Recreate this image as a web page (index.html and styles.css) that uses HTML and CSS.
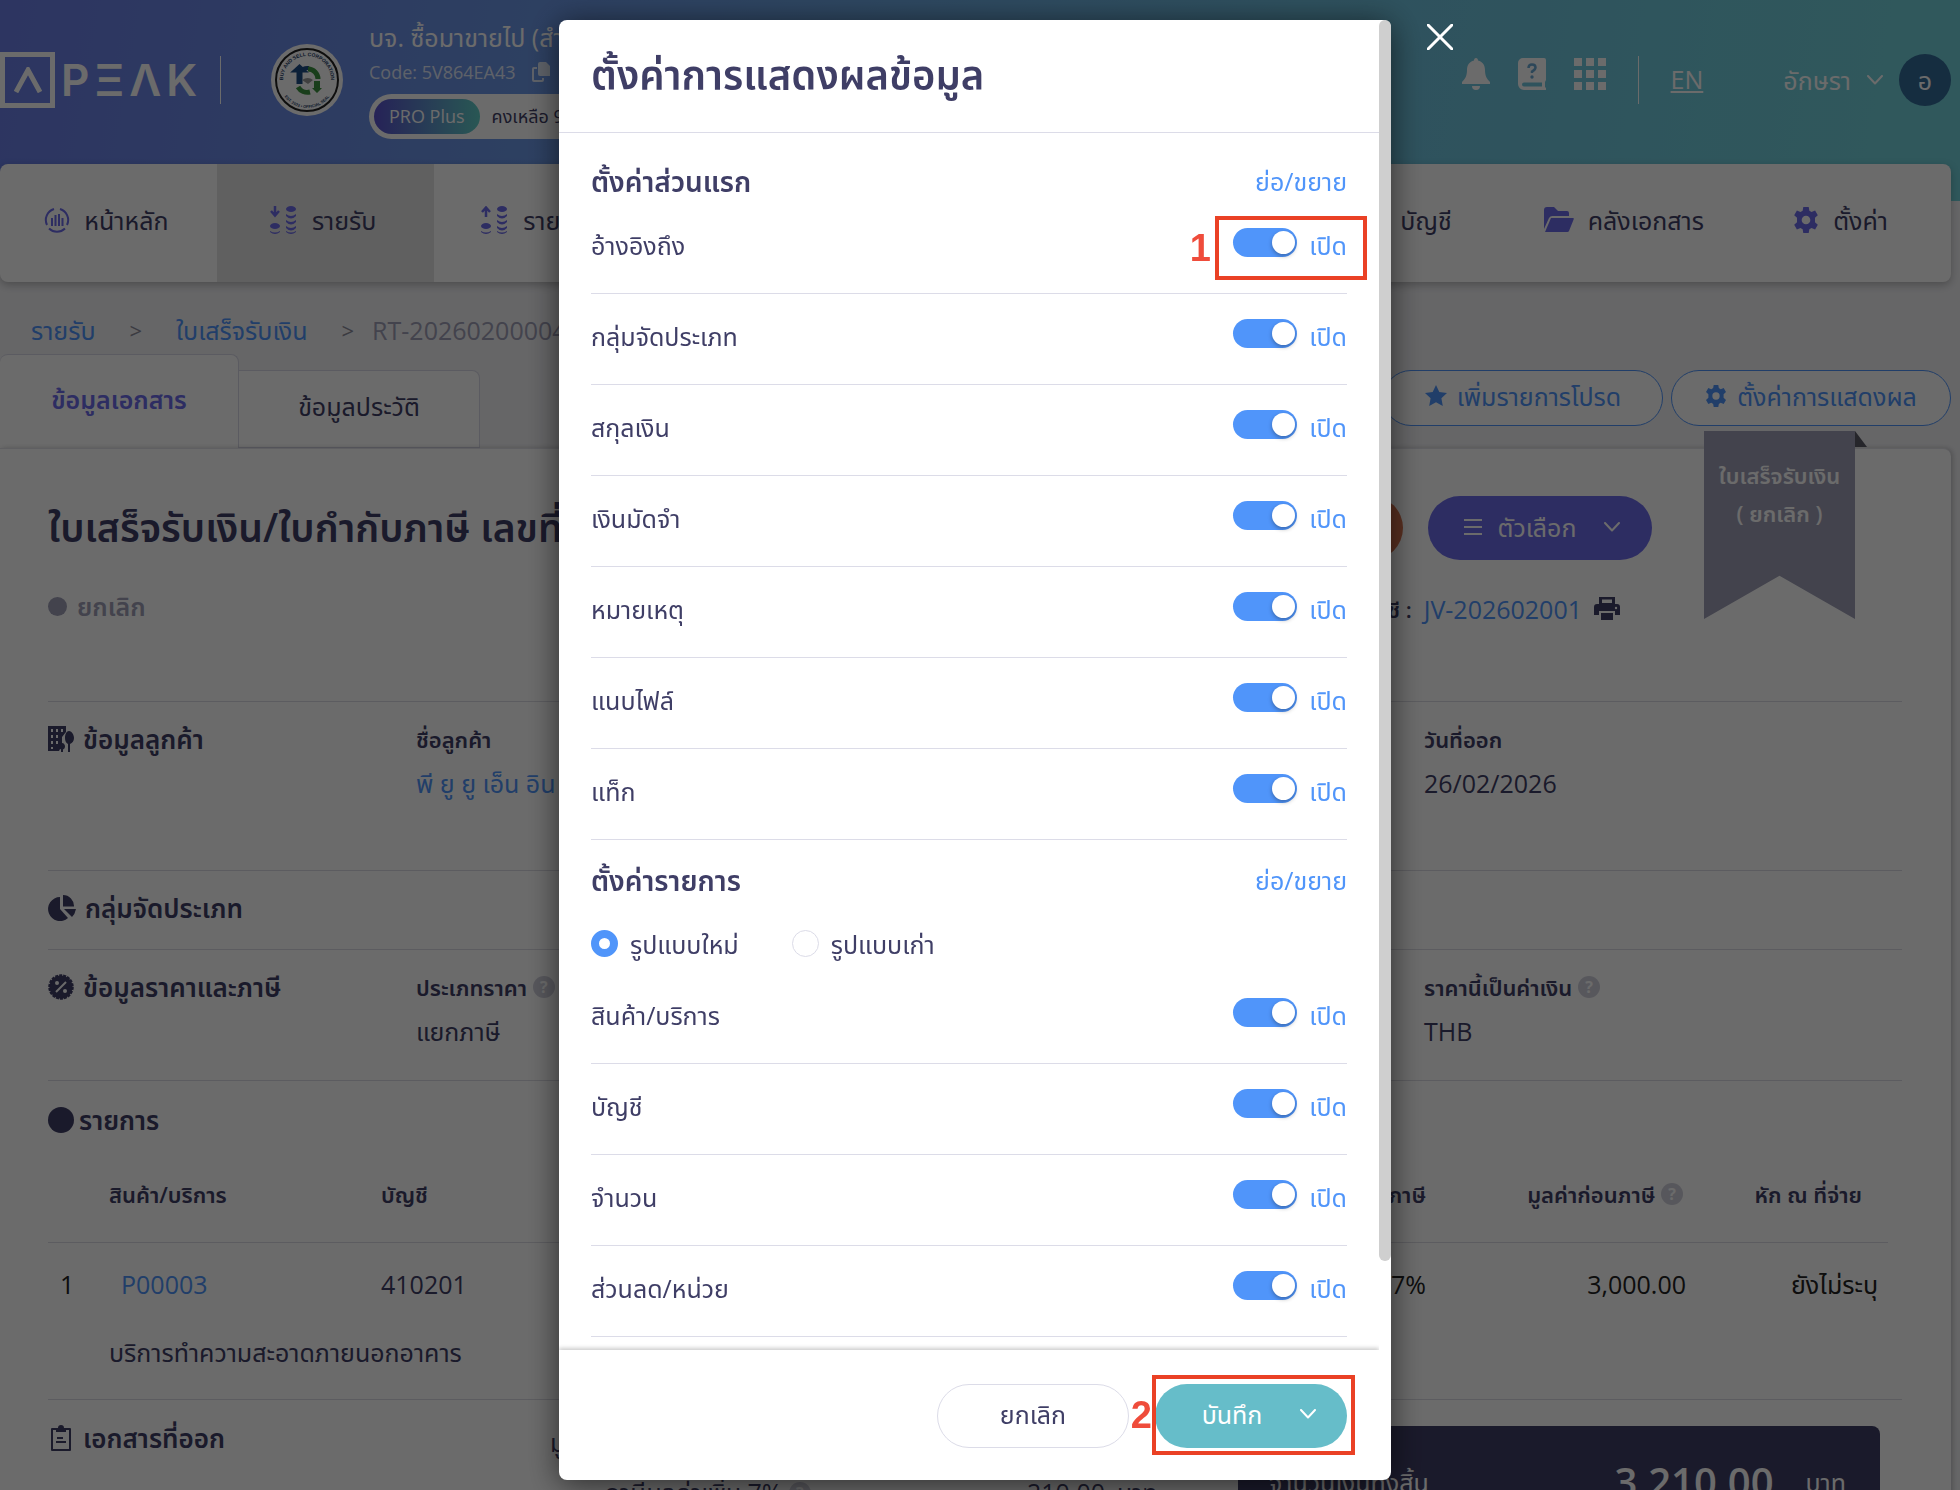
FILE: index.html
```html
<!DOCTYPE html>
<html lang="th">
<head>
  <meta charset="UTF-8">
  <meta name="viewport" content="width=device-width, initial-scale=1.0">
  <title>PEAK - ตั้งค่าการแสดงผลข้อมูล</title>
  <link rel="stylesheet" href="styles.css">
</head>
<body>
  <!-- shared icons -->
  <svg class="sprite" width="0" height="0">
    <symbol id="gear" viewBox="0 0 24 24">
      <path fill-rule="evenodd" d="M9.5 0h5l.6 3.4 2 1.2L20.400 3.300l2.500 4.400L20.300 10v4l2.600 2.300-2.500 4.400-3.300-1.300-2 1.200-.6 3.400h-5l-.6-3.400-2-1.200-3.300 1.300-2.500-4.400L3.700 14v-4L1.100 7.700l2.500-4.400 3.300 1.300 2-1.200zM12 8a4 4 0 1 0 0 8 4 4 0 0 0 0-8z"/>
    </symbol>
    <symbol id="chevron" viewBox="0 0 16 10">
      <path d="M1 1l7 7.500L15 1" fill="none" stroke="currentColor" stroke-width="2" stroke-linecap="round" stroke-linejoin="round"/>
    </symbol>
    <symbol id="coins" viewBox="0 0 12 28">
      <ellipse cx="6" cy="3" rx="5" ry="3"/>
      <path d="M1 8q5 4 10 0v2q-5 5-10 0zM1 14q5 4 10 0v2q-5 5-10 0zM1 20q5 4 10 0v2q-5 5-10 0zM1 25q5 3 10 0v1q-5 4-10 0z"/>
    </symbol>
    <symbol id="coins-low" viewBox="0 0 12 28">
      <ellipse cx="6" cy="20" rx="5" ry="3"/>
      <path d="M1 25q5 3 10 0v1q-5 4-10 0z"/>
    </symbol>
  </svg>

  <div class="page">
    <header class="topbar">
      <div class="brand" role="img" aria-label="PEAK">
        <span class="brand-box"><svg viewBox="0 0 28 26" width="28" height="26"><path d="M2 25L14 3l12 22" fill="none" stroke="currentColor" stroke-width="5"/></svg></span>
        <span class="brand-word"><span>P</span><span>Ξ</span><span>Λ</span><span>K</span></span>
      </div>
      <span class="bar"></span>
      <svg class="seal" viewBox="0 0 72 72" width="72" height="72">
        <circle cx="36" cy="36" r="36" fill="#fff"/>
        <circle cx="36" cy="36" r="31" fill="none" stroke="#222" stroke-width="2"/>
        <path id="arcTop" d="M19 53A24 24 0 1 1 53 53" fill="none"/>
        <path id="arcBottom" d="M8 36a28 28 0 0 0 56 0" fill="none"/>
        <text class="seal-text"><textPath href="#arcTop" startOffset="50%" text-anchor="middle">BUY AND SELL CORPORATION</textPath></text>
        <text class="seal-text seal-small"><textPath href="#arcBottom" startOffset="50%" text-anchor="middle">EST. 2023 • OFFICIAL SEAL</textPath></text>
        <path d="M27 40V27M30 40V27M23 27l5.500-5 5.500 5z" fill="#1d4c86" stroke="#1d4c86" stroke-width="3"/>
        <path d="M32 25a10 10 0 0 1 6-1" fill="none" stroke="#1d4c86" stroke-width="4"/>
        <path d="M37 25a10 10 0 0 1 10 10M27 43a11 11 0 0 0 12 5" fill="none" stroke="#3d9440" stroke-width="5"/>
        <path d="M43 37h6v7h2l-5 5-5-5h2z" fill="#3d9440"/>
        <path d="M31 36q6-4 11 0l-5 4z" fill="#999"/>
      </svg>
      <div class="company">
        <span class="company-name">บจ. ซื้อมาขายไป (สำนักงาน)</span>
        <span class="company-code">Code: 5V864EA43
          <svg viewBox="0 0 18 20" width="18" height="20" fill="currentColor"><path d="M8 0h6l4 4v10H8a2 2 0 0 1-2-2V2a2 2 0 0 1 2-2z"/><path d="M5 6H2a1 1 0 0 0-1 1v11a1 1 0 0 0 1 1h8a1 1 0 0 0 1-1v-2" fill="none" stroke="currentColor" stroke-width="2"/></svg>
        </span>
        <span class="plan"><b>PRO Plus</b>คงเหลือ 99 วัน</span>
      </div>
      <div class="tools">
        <svg viewBox="0 0 28 32" width="28" height="32"><path d="M14 0c1.300 0 2 1 2 2.500 4.500 1.200 7 4.500 7 9.500 0 6 2 9 5 12v2H0v-2c3-3 5-6 5-12 0-5 2.500-8.300 7-9.500C12 1 12.700 0 14 0zM10 28h8a4 4 0 0 1-8 0z"/></svg>
        <svg viewBox="0 0 28 32" width="28" height="32"><path fill-rule="evenodd" d="M5 0h21a2 2 0 0 1 2 2v20l-1 2v5l1 1v2H6a6 6 0 0 1-6-6V5a5 5 0 0 1 5-5zM6 24.500a2 2 0 0 0 0 4h18v-4z"/><path d="M10.500 10q0-3.500 3.500-3.500t3.500 3q0 2-3.500 4v1.500" fill="none" stroke="#6ba9d4" stroke-width="2.500"/><circle cx="14" cy="19" r="1.700" fill="#6ba9d4"/></svg>
        <svg viewBox="0 0 32 32" width="32" height="32"><path d="M0 0h8v8H0zM12 0h8v8h-8zM24 0h8v8h-8zM0 12h8v8H0zM12 12h8v8h-8zM24 12h8v8h-8zM0 24h8v8H0zM12 24h8v8h-8zM24 24h8v8h-8z"/></svg>
      </div>
      <span class="bar"></span>
      <a class="lang" href="#">EN</a>
      <button class="user" type="button">อักษรา <svg width="16" height="10"><use href="#chevron"/></svg><span class="avatar">อ</span></button>
    </header>

    <nav class="menu">
      <a href="#"><svg viewBox="0 0 26 26" width="26" height="26"><path d="M10 2A11.500 11.500 0 0 0 3 18M16 2a11.500 11.500 0 0 1 7 16M5 21.500a11.500 11.500 0 0 0 16 0" fill="none" stroke="currentColor" stroke-width="2"/><path d="M8 11v8M11.500 8v11M15 7v12M18.500 11v8" stroke="currentColor" stroke-width="2"/></svg>หน้าหลัก</a>
      <a href="#" class="active"><svg viewBox="0 0 28 28" width="28" height="28"><path d="M5 0v9M1 5l4 4.500L9 5" fill="none" stroke="currentColor" stroke-width="2.500"/><use href="#coins-low" x="-1" width="12" height="28"/><use href="#coins" x="15" width="12" height="28"/></svg>รายรับ</a>
      <a href="#"><svg viewBox="0 0 28 28" width="28" height="28"><path d="M5 11V2M1 6l4-4.500L9 6" fill="none" stroke="currentColor" stroke-width="2.500"/><use href="#coins-low" x="-1" width="12" height="28"/><use href="#coins" x="15" width="12" height="28"/></svg>รายจ่าย</a>
      <a href="#" class="menu-right"><svg viewBox="0 0 24 24" width="24" height="24"><path d="M2 2h20v20H2z"/></svg>บัญชี</a>
      <a href="#"><svg viewBox="0 0 30 26" width="30" height="26"><path d="M0 22V3a3 3 0 0 1 3-3h7l4 4h9a2 2 0 0 1 2 2v3H9a4 4 0 0 0-4 2z"/><path d="M7 11h22q1 0 .8 1L25 24q-.5 1-1.500 1H1z"/></svg>คลังเอกสาร</a>
      <a href="#"><svg width="26" height="26"><use href="#gear"/></svg>ตั้งค่า</a>
    </nav>

    <div class="crumbs">
      <a href="#">รายรับ</a><span>&gt;</span><a href="#">ใบเสร็จรับเงิน</a><span class="last">&gt;</span><em>RT-20260200004</em>
    </div>

    <div class="tabs">
      <button type="button" class="tab selected">ข้อมูลเอกสาร</button>
      <button type="button" class="tab">ข้อมูลประวัติ</button>
      <div class="tab-actions">
        <button type="button"><svg viewBox="0 0 22 22" width="22" height="22"><path d="M11 0l3.300 7 7.700 1-5.600 5.300L17.800 21 11 17.300 4.200 21l1.400-7.700L0 8l7.700-1z"/></svg>เพิ่มรายการโปรด</button>
        <button type="button"><svg width="22" height="22"><use href="#gear"/></svg>ตั้งค่าการแสดงผล</button>
      </div>
    </div>

    <main class="doc">
      <div class="ribbon"><span>ใบเสร็จรับเงิน<br>( ยกเลิก )</span></div>
      <div class="doc-head">
        <div>
          <h1>ใบเสร็จรับเงิน/ใบกำกับภาษี เลขที่</h1>
          <p class="status"><i></i>ยกเลิก</p>
        </div>
        <div class="doc-side">
          <div class="doc-buttons">
            <button type="button" class="print-btn" aria-label="พิมพ์"></button>
            <button type="button" class="option-btn"><svg viewBox="0 0 18 16" width="18" height="16"><path d="M0 1h18M0 8h18M0 15h18" stroke="currentColor" stroke-width="2"/></svg>ตัวเลือก<svg width="16" height="10"><use href="#chevron"/></svg></button>
          </div>
          <p class="journal"><b>บัญชี :</b> <a href="#">JV-202602001</a>
            <svg viewBox="0 0 26 24" width="26" height="24"><path fill-rule="evenodd" d="M5 0h16v7H5zM8 2.500V6h10V2.500z"/><path d="M3 7h20a3 3 0 0 1 3 3v8h-5v-4H5v4H0v-8a3 3 0 0 1 3-3z"/><path d="M7 16h12v7H7z"/><circle cx="22" cy="11" r="1.200" fill="#fff"/></svg>
          </p>
        </div>
      </div>

      <section class="info customer">
        <h2><svg viewBox="0 0 26 26" width="26" height="26"><path fill-rule="evenodd" d="M0 0h18v6l-4 5v8l-3 6H0zM3 3v3h2V3zm5 0v3h2V3zm5 0v3h2V3zM3 9v3h2V9zm5 0v3h2V9zm-5 6v3h2v-3zm5 0v3h2v-3zm-5 6v2h2v-2z"/><path d="M21 5c3 0 5 4 5 7s-1.500 5-4 6v8h-2v-8c-2-1-3-3-3-6s1-7 4-7z"/><path d="M14 17c2 0 3 2 3 3.500S16 23 15 23.500V26h-2v-2.500c-1-.5-2-1.500-2-3s1-3.500 3-3.500z"/></svg>ข้อมูลลูกค้า</h2>
        <div class="field"><b>ชื่อลูกค้า</b><a href="#">พี ยู ยู เอ็น อิน</a></div>
        <div class="field"><b>วันที่ออก</b><span>26/02/2026</span></div>
      </section>

      <section class="info">
        <h2><svg viewBox="0 0 28 26" width="28" height="26"><path d="M12 2v12l8 9A12 12 0 1 1 12 2z"/><path d="M15 0a11 11 0 0 1 11 11.500H15zM16 14h12q-1 5-4 8z"/></svg>กลุ่มจัดประเภท</h2>
      </section>

      <section class="info price">
        <h2><svg viewBox="0 0 26 26" width="26" height="26"><circle cx="13" cy="13" r="11.500" stroke="currentColor" stroke-width="2.500" stroke-dasharray="3 1"/><path d="M8 18L18 8" stroke="#fff" stroke-width="2"/><circle cx="9" cy="9" r="2" fill="#fff"/><circle cx="17" cy="17" r="2" fill="#fff"/></svg>ข้อมูลราคาและภาษี</h2>
        <div class="field"><b>ประเภทราคา <i class="help">?</i></b><span>แยกภาษี</span></div>
        <div class="field"><b>ราคานี้เป็นค่าเงิน <i class="help">?</i></b><span>THB</span></div>
      </section>

      <section class="items">
        <h2><i class="dot"></i>รายการ</h2>
        <table>
          <thead>
            <tr>
              <th class="c-no"></th>
              <th class="c-item">สินค้า/บริการ</th>
              <th class="c-acc">บัญชี</th>
              <th class="c-vat">ภาษี</th>
              <th class="c-sum">มูลค่าก่อนภาษี <i class="help">?</i></th>
              <th class="c-wht">หัก ณ ที่จ่าย</th>
            </tr>
          </thead>
          <tbody>
            <tr>
              <td class="c-no">1</td>
              <td class="c-item"><a href="#">P00003</a></td>
              <td class="c-acc">410201</td>
              <td class="c-vat">7%</td>
              <td class="c-sum">3,000.00</td>
              <td class="c-wht">ยังไม่ระบุ</td>
            </tr>
            <tr class="desc">
              <td></td>
              <td colspan="5">บริการทำความสะอาดภายนอกอาคาร</td>
            </tr>
          </tbody>
        </table>
      </section>

      <section class="summary">
        <h2><svg viewBox="0 0 26 26" width="26" height="26"><path d="M4 4h18v21H4z" fill="none" stroke="currentColor" stroke-width="2" stroke-linejoin="round"/><path d="M8 3h2a3 3 0 0 1 6 0h2v4H8zM9 12h6v2H9zM8 16h10v2H8z"/></svg>เอกสารที่ออก</h2>
        <div class="sums">
          <p>มูลค่าก่อนภาษี</p>
          <p class="vat"><span>ภาษีมูลค่าเพิ่ม 7% <i class="help">?</i></span><span>210.00</span><span>บาท</span></p>
        </div>
        <div class="total"><span>จำนวนเงินทั้งสิ้น</span><strong>3,210.00</strong><span>บาท</span></div>
      </section>
    </main>
  </div>

  <div class="overlay">
    <div class="modal" role="dialog" aria-labelledby="modalTitle">
      <button type="button" class="close" aria-label="ปิด"><svg viewBox="0 0 26 26" width="26" height="26"><path d="M1 1l24 24M25 1L1 25" stroke="#fff" stroke-width="3" stroke-linecap="round"/></svg></button>
      <div class="scrollbar"></div>
      <h2 class="modal-title" id="modalTitle">ตั้งค่าการแสดงผลข้อมูล</h2>

      <div class="modal-body">
        <div class="group-head"><h3>ตั้งค่าส่วนแรก</h3><a href="#">ย่อ/ขยาย</a></div>
        <div class="row"><span>อ้างอิงถึง</span><label><input type="checkbox" checked>เปิด</label><div class="mark mark-1"><b>1</b></div></div>
        <div class="row"><span>กลุ่มจัดประเภท</span><label><input type="checkbox" checked>เปิด</label></div>
        <div class="row"><span>สกุลเงิน</span><label><input type="checkbox" checked>เปิด</label></div>
        <div class="row"><span>เงินมัดจำ</span><label><input type="checkbox" checked>เปิด</label></div>
        <div class="row"><span>หมายเหตุ</span><label><input type="checkbox" checked>เปิด</label></div>
        <div class="row"><span>แนบไฟล์</span><label><input type="checkbox" checked>เปิด</label></div>
        <div class="row"><span>แท็ก</span><label><input type="checkbox" checked>เปิด</label></div>

        <div class="group-head"><h3>ตั้งค่ารายการ</h3><a href="#">ย่อ/ขยาย</a></div>
        <div class="radios">
          <label><input type="radio" name="layout" checked>รูปแบบใหม่</label>
          <label><input type="radio" name="layout">รูปแบบเก่า</label>
        </div>
        <div class="row"><span>สินค้า/บริการ</span><label><input type="checkbox" checked>เปิด</label></div>
        <div class="row"><span>บัญชี</span><label><input type="checkbox" checked>เปิด</label></div>
        <div class="row"><span>จำนวน</span><label><input type="checkbox" checked>เปิด</label></div>
        <div class="row"><span>ส่วนลด/หน่วย</span><label><input type="checkbox" checked>เปิด</label></div>
      </div>

      <div class="modal-foot">
        <button type="button" class="cancel">ยกเลิก</button>
        <div class="save-wrap">
          <button type="button" class="save">บันทึก<svg width="16" height="10"><use href="#chevron"/></svg></button>
          <div class="mark mark-2"><b>2</b></div>
        </div>
      </div>
    </div>
  </div>
</body>
</html>
```
FILE: styles.css
```css
* {
  box-sizing: border-box;
}
body {
  margin: 0;
  height: 100vh;
  overflow: hidden;
  background: #f3f3f6;
  color: #3f3e66;
  font-family: "Open Sans", "Noto Sans Thai", "Noto Sans", sans-serif;
  font-size: 25px;
  font-weight: 400;
  line-height: 32px;
}
h1, h2, h3, p {
  margin: 0;
}
a {
  color: #5095fa;
  text-decoration: none;
}
button {
  font: inherit;
  color: inherit;
  border: 0;
  background: none;
  padding: 0;
  cursor: pointer;
}
svg {
  fill: currentColor;
  flex: none;
}
.sprite {
  position: absolute;
}

/* top bar */
.page {
  height: 100vh;
  overflow: hidden;
  padding-right: 9px;
  background: linear-gradient(100deg, #6b7ee7 0%, #6da0e8 35%, #6fc0e0 65%, #72d1db 95%) no-repeat 0 0 / 100% 201px;
  background-color: #f3f3f6;
}
.topbar {
  display: flex;
  align-items: center;
  height: 164px;
  padding-bottom: 4px;
  color: #fff;
}
.brand {
  display: flex;
  align-items: center;
  width: 220px;
}
.brand-box {
  display: flex;
  align-items: center;
  justify-content: center;
  width: 55px;
  height: 56px;
  border: 5px solid #fff;
}
.brand-word {
  display: flex;
  gap: 5px;
  margin-left: 6px;
  font-family: Inter, sans-serif;
  font-size: 44px;
  font-weight: 600;
  line-height: 48px;
}
.bar {
  width: 1px;
  height: 48px;
  background: #fff;
}
.seal {
  margin: 0 26px 0 50px;
}
.seal-text {
  font: bold 5px "Liberation Sans", sans-serif;
  fill: #1d3c66;
}
.seal-small {
  font-size: 4px;
}
.company {
  display: flex;
  flex-direction: column;
  flex: 1;
  align-items: flex-start;
  padding-bottom: 4px;
  white-space: nowrap;
}
.company-name {
  line-height: 38px;
}
.company-code {
  display: flex;
  align-items: center;
  gap: 16px;
  font-size: 18px;
  opacity: .8;
}
.plan {
  display: flex;
  align-items: center;
  gap: 12px;
  height: 45px;
  padding: 0 20px 0 5px;
  margin-top: 6px;
  border-radius: 23px;
  background: #fff;
  color: #3f3e66;
  font-size: 18px;
}
.plan b {
  padding: 0 15px;
  border-radius: 18px;
  background: linear-gradient(90deg, #5b52d0, #62cfc8);
  color: #fff;
  font-weight: 400;
  line-height: 35px;
}
.tools {
  display: flex;
  gap: 28px;
  margin-right: 32px;
  padding-bottom: 12px;
}
.lang {
  margin: 0 80px 0 32px;
  padding-bottom: 3px;
  color: #fff;
  text-decoration: underline;
}
.user {
  display: flex;
  align-items: center;
  gap: 16px;
}
.avatar {
  width: 52px;
  border-radius: 50%;
  background: #346b98;
  line-height: 52px;
}

/* menu */
.menu {
  display: grid;
  grid-template-columns: repeat(9, 1fr);
  height: 118px;
  border-radius: 8px;
  background: #fff;
  box-shadow: 0 3px 8px rgba(0, 0, 0, .25);
}
.menu a {
  display: flex;
  align-items: center;
  justify-content: center;
  gap: 14px;
  padding: 0 4px 6px 0;
  color: #3f3e66;
}
.menu svg {
  color: #6d6bea;
}
.menu .active {
  background: #e5e5e5;
}
.menu .menu-right {
  grid-column: 7;
}

.crumbs {
  display: flex;
  align-items: center;
  height: 72px;
  padding: 24px 31px 0;
}
.crumbs span {
  margin: 0 34px;
  color: #8c8c9b;
  font-size: 22px;
}
.crumbs .last {
  margin-right: 18px;
}
.crumbs em {
  font-style: normal;
  color: #9f9fb7;
}

/* tabs */
.tabs {
  display: flex;
  align-items: flex-end;
  height: 94px;
}
.tab {
  width: 241px;
  height: 78px;
  padding-bottom: 6px;
  border: 1px solid #d9d9e6;
  border-left: 0;
  border-radius: 0 8px 0 0;
  background: #fff;
}
.tab.selected {
  width: 239px;
  height: 94px;
  border-bottom: 0;
  border-radius: 8px 8px 0 0;
  color: #6d6bea;
  font-weight: 600;
}
.tab-actions {
  display: flex;
  gap: 8px;
  margin-left: auto;
  padding-bottom: 22px;
}
.tab-actions button {
  display: flex;
  align-items: center;
  justify-content: center;
  gap: 10px;
  width: 280px;
  height: 56px;
  padding-bottom: 4px;
  border: 1px solid #5095fa;
  border-radius: 28px;
  background: #fff;
  color: #5095fa;
}

/* document */
.doc {
  position: relative;
  height: 1100px;
  padding: 0 49px 0 48px;
  background: #fff;
  border-top: 1px solid #e2e2ea;
  border-radius: 0 8px 0 0;
  box-shadow: 2px 0 5px rgba(0, 0, 0, .2);
}
.ribbon {
  position: absolute;
  top: -18px;
  right: 96px;
  width: 151px;
  height: 188px;
  padding-top: 25px;
  background: #9f9fb7;
  clip-path: polygon(0 0, 100% 0, 100% 100%, 50% 77%, 0 100%);
  color: #fff;
  font-size: 22px;
  font-weight: 600;
  line-height: 38px;
  text-align: center;
}
.doc::before {
  content: "";
  position: absolute;
  top: -18px;
  right: 84px;
  border-left: 12px solid #5b5b66;
  border-top: 16px solid transparent;
}
.doc-head {
  display: flex;
  justify-content: space-between;
  height: 252px;
  padding-top: 47px;
  padding-right: 250px;
}
h1 {
  font-size: 39px;
  font-weight: 600;
  line-height: 62px;
  white-space: nowrap;
}
.status {
  display: flex;
  align-items: center;
  gap: 10px;
  margin-top: 32px;
  color: #9f9fb7;
  font-weight: 600;
}
.status i {
  width: 19px;
  height: 19px;
  border-radius: 50%;
  background: #9f9fb7;
}
.doc-buttons {
  display: flex;
  justify-content: flex-end;
  gap: 25px;
}
.print-btn {
  width: 120px;
  border-radius: 32px;
  background: #d8734f;
}
.option-btn {
  display: flex;
  align-items: center;
  justify-content: center;
  gap: 16px;
  width: 224px;
  height: 64px;
  padding: 0 0 3px 4px;
  border-radius: 32px;
  background: #6d6bea;
  color: #fff;
}
.option-btn svg:last-child {
  margin-left: 12px;
}
.journal {
  display: flex;
  align-items: center;
  justify-content: flex-end;
  gap: 12px;
  margin: 33px 32px 0 0;
}
.journal b,
.field b,
th {
  font-size: 22px;
  font-weight: 600;
}
h2 {
  display: flex;
  align-items: center;
  gap: 9px;
  height: 32px;
  font-size: 26px;
  font-weight: 600;
  white-space: nowrap;
}
.info {
  display: grid;
  grid-template-columns: 368px 1008fr 478fr;
  align-items: start;
  min-height: 79px;
  padding-top: 21px;
  border-top: 1px solid #dcdce4;
}
.customer {
  min-height: 169px;
}
.price {
  min-height: 131px;
}
.field {
  display: flex;
  flex-direction: column;
  gap: 12px;
}
.help {
  display: inline-block;
  width: 22px;
  border-radius: 50%;
  background: #d0d0dc;
  color: #fff;
  font-size: 16px;
  font-style: normal;
  font-weight: 700;
  line-height: 22px;
  text-align: center;
  vertical-align: 3px;
}
.items {
  height: 319px;
  padding-top: 23px;
  border-top: 1px solid #dcdce4;
}
.dot {
  width: 26px;
  height: 26px;
  margin-right: -4px;
  border-radius: 50%;
  background: #3f3e66;
}
table {
  width: calc(100% - 14px);
  margin-top: 11px;
  border-collapse: collapse;
  table-layout: fixed;
}
th {
  height: 95px;
  padding: 0;
  border-bottom: 1px solid #dcdce4;
  text-align: left;
}
td {
  height: 84px;
  padding: 0;
}
.c-no {
  width: 61px;
  padding-left: 12px;
}
.c-item {
  width: 272px;
}
td.c-item {
  padding-left: 12px;
}
.c-vat,
.c-sum,
.c-wht {
  width: 260px;
  text-align: right;
  white-space: nowrap;
}
.c-wht {
  width: 202px;
}
th.c-sum {
  padding-right: 3px;
}
th.c-wht {
  padding-right: 26px;
}
td.c-no,
td.c-vat,
td.c-sum,
td.c-wht {
  color: #222;
}
td.c-wht {
  padding-right: 10px;
}
.desc td {
  height: 52px;
}
.summary {
  display: flex;
  padding-top: 22px;
  border-top: 1px solid #dcdce4;
}
.summary h2 {
  width: 502px;
}
.sums {
  flex: 1;
  padding-top: 4px;
}
.sums .vat {
  display: flex;
  gap: 12px;
  padding: 18px 0 0 55px;
}
.vat span:first-child {
  width: 410px;
}
.total {
  display: flex;
  gap: 32px;
  width: 642px;
  height: 150px;
  margin: 4px 22px 0 0;
  padding: 34px 34px 0 31px;
  border-radius: 8px;
  background: #3f3e66;
  color: #fff;
  line-height: 44px;
}
.total strong {
  margin-left: auto;
  font-size: 40px;
  font-weight: 600;
}

/* modal */
.overlay {
  position: fixed;
  inset: 0;
  display: flex;
  justify-content: center;
  padding: 20px 10px 10px 0;
  background: rgba(0, 0, 0, .58);
}
.modal {
  position: relative;
  display: flex;
  flex-direction: column;
  width: 832px;
  padding-right: 12px;
  border-radius: 8px;
  background: #fff;
  box-shadow: 0 4px 32px rgba(0, 0, 0, .6);
}
.close {
  position: absolute;
  top: 4px;
  left: calc(100% + 36px);
}
.scrollbar {
  position: absolute;
  top: 0;
  right: 0;
  width: 12px;
  height: 85%;
  border-radius: 6px;
  background: #cfcfcf;
}
.modal-title {
  height: 113px;
  padding: 0 32px 2px;
  border-bottom: 1px solid #dcdce8;
  font-size: 40px;
}
.modal-body {
  flex: 1;
  min-height: 0;
  overflow: hidden;
  padding: 8px 32px 0;
}
.group-head {
  display: flex;
  align-items: center;
  justify-content: space-between;
  height: 62px;
  padding-top: 18px;
}
h3 {
  font-size: 28px;
  font-weight: 600;
}
.row {
  position: relative;
  display: flex;
  align-items: center;
  justify-content: space-between;
  height: 91px;
  padding-bottom: 7px;
  border-bottom: 1px solid #dcdce8;
}
.row label {
  display: flex;
  align-items: center;
  gap: 12px;
  color: #5095fa;
}
.row input {
  display: flex;
  align-items: center;
  justify-content: flex-end;
  appearance: none;
  width: 64px;
  height: 29px;
  margin: 0 0 4px;
  padding-right: 2px;
  border-radius: 15px;
  background: #5095fa;
}
.row input::before {
  content: "";
  width: 23px;
  height: 23px;
  border-radius: 50%;
  background: #fff;
  box-shadow: 0 2px 4px rgba(0, 0, 0, .3);
}
.radios {
  display: flex;
  gap: 53px;
  height: 71px;
  align-items: center;
  padding-top: 12px;
}
.radios label {
  display: flex;
  align-items: center;
  gap: 12px;
}
.radios input {
  appearance: none;
  width: 27px;
  height: 27px;
  margin: 0;
  border: 1px solid #dcdce8;
  border-radius: 50%;
}
.radios input:checked {
  border: 8px solid #5095fa;
}
.modal-foot {
  display: flex;
  gap: 26px;
  align-items: flex-start;
  justify-content: flex-end;
  height: 130px;
  padding: 34px 32px 0;
  box-shadow: 0 -2px 4px rgba(0, 0, 0, .2);
  clip-path: inset(-8px 0 0 0);
}
.modal-foot button {
  width: 192px;
  height: 64px;
  padding-bottom: 4px;
  border-radius: 32px;
}
.cancel {
  border: 1px solid #dcdce8;
}
.save-wrap {
  position: relative;
}
.modal-foot .save {
  display: flex;
  align-items: center;
  justify-content: center;
  gap: 38px;
  padding-left: 16px;
  background: #66bdc9;
  color: #fff;
}

/* numbered step marks */
.mark {
  position: absolute;
  border: 4px solid #ea4125;
  pointer-events: none;
}
.mark b {
  position: absolute;
  right: calc(100% + 8px);
  top: 8px;
  color: #ef4c3b;
  font: bold 38px/40px "Liberation Sans", sans-serif;
}
.mark-1 {
  top: 13px;
  right: -20px;
  width: 152px;
  height: 64px;
}
.mark-2 {
  inset: -9px -8px -7px -3px;
}
.mark-2 b {
  right: calc(100% + 4px);
  top: 16px;
}
```
